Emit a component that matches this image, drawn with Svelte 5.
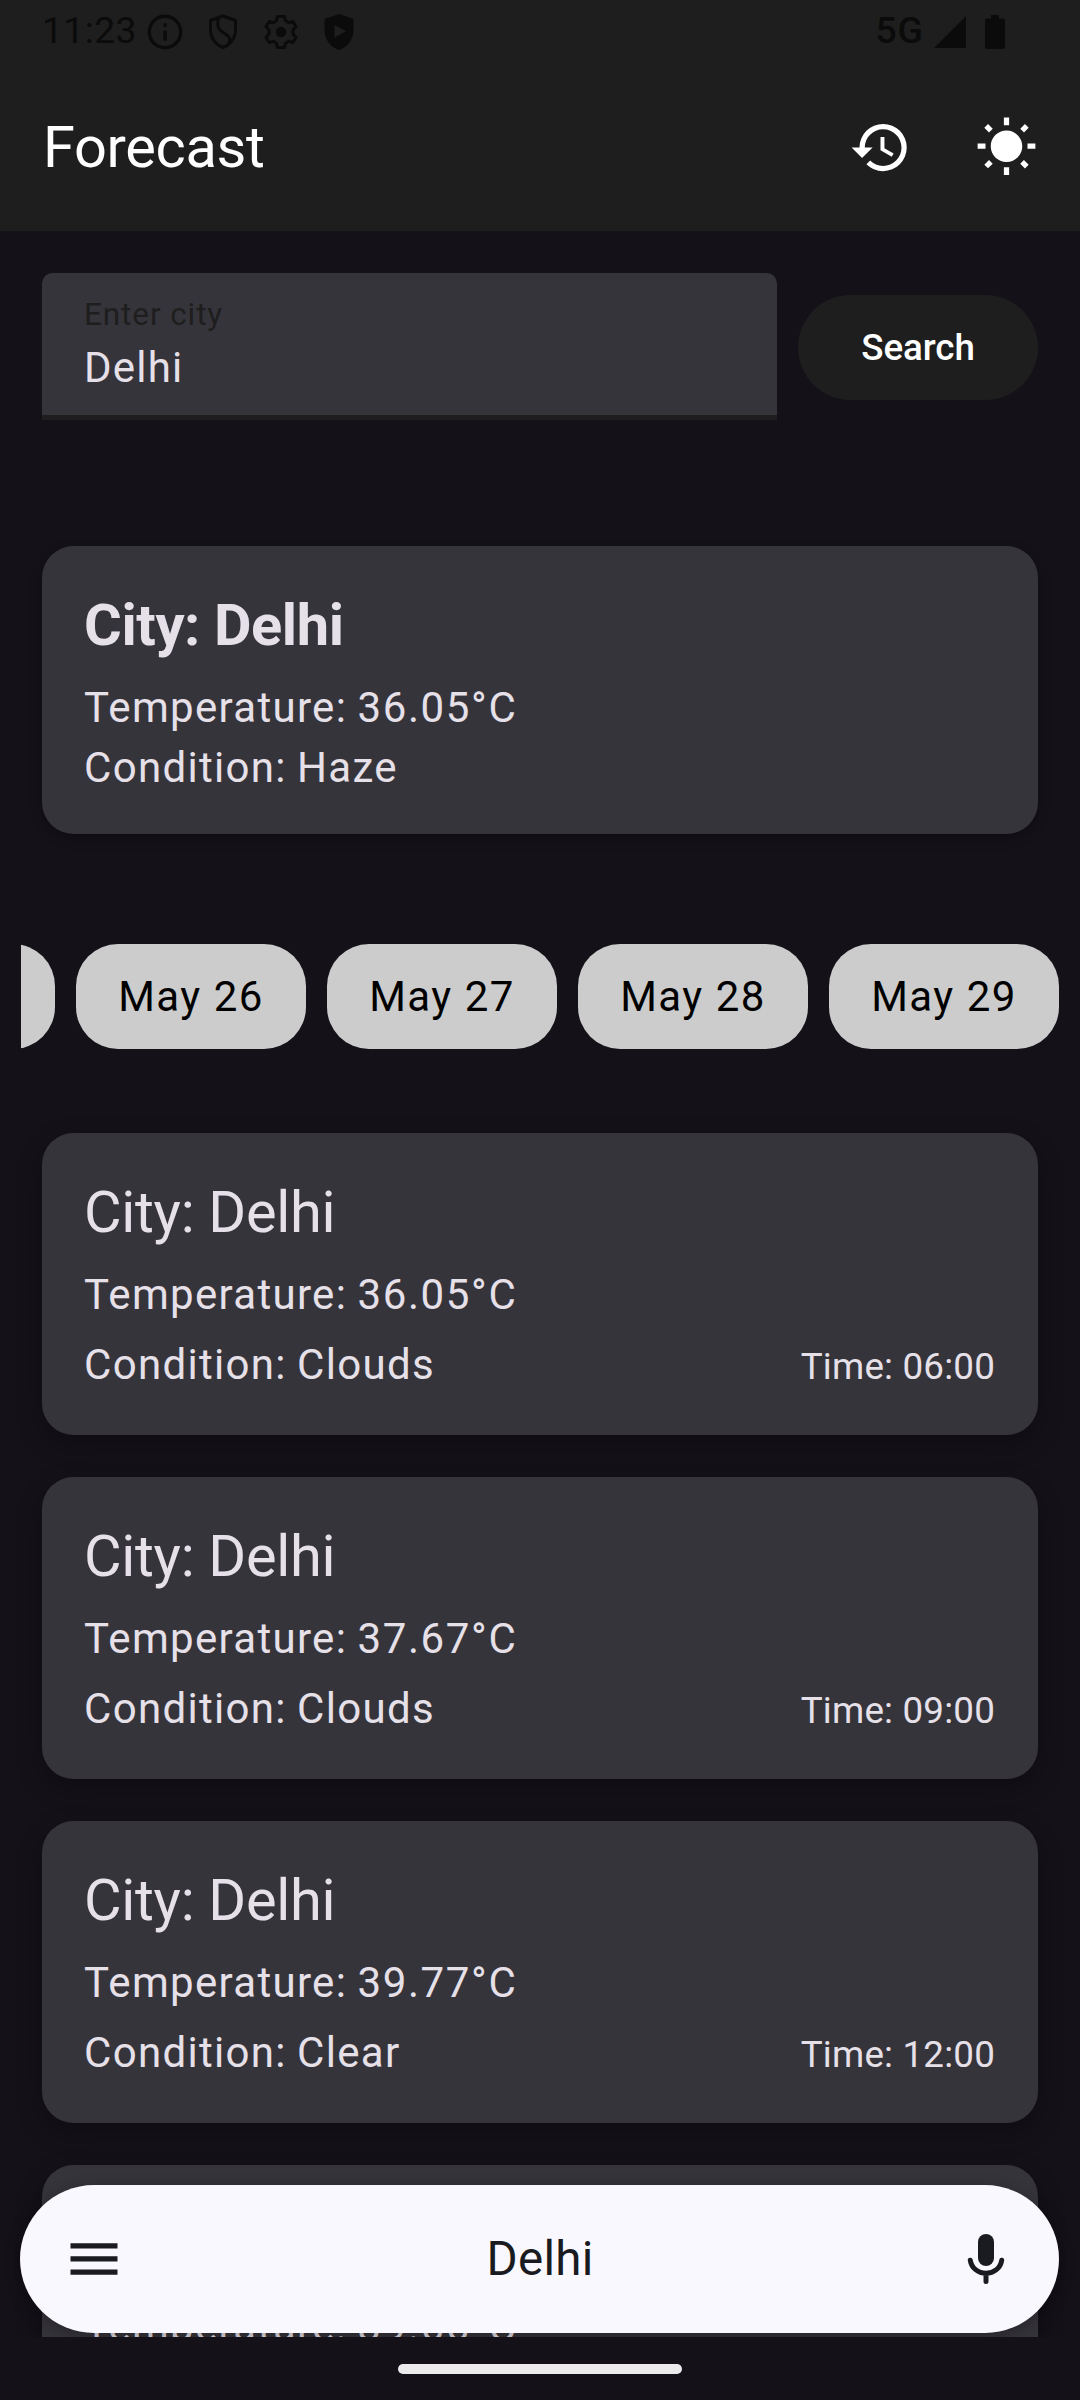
<script>
  const chips = ['May 26', 'May 27', 'May 28', 'May 29'];
  const forecasts = [
    { temp: '36.05', condition: 'Clouds', time: '06:00' },
    { temp: '37.67', condition: 'Clouds', time: '09:00' },
    { temp: '39.77', condition: 'Clear', time: '12:00' },
    { temp: '39.66', condition: 'Clear', time: '15:00' }
  ];
</script>

<div class="screen">
  <header>
    <div class="status">
      <span class="clock">11:23</span>
      <svg class="info" viewBox="0 0 36 36"><circle cx="18" cy="18" r="15.7" fill="none" stroke="currentColor" stroke-width="3.4" /><path fill="currentColor" d="M16.4 16.5h3.4v10.3h-3.4zM16.4 9.3h3.4v3.4h-3.4z" /></svg>
      <svg class="shield" viewBox="0 0 30 36"><path fill="none" stroke="currentColor" stroke-width="3" stroke-linejoin="round" d="M15 2 27.5 6.5V16C27.5 24 22 31 15 33.5C8 31 2.500 24 2.500 16V6.500ZM10.500 4C8 15 12 16 16 19C22 23 23 25 20.500 30" /></svg>
      <svg class="gear" viewBox="0 0 34 36"><path fill="none" stroke="currentColor" stroke-width="3" stroke-linejoin="round" d="M13.500 2.500h7l1 4.300 3.300 1.900 4-1.300 3.200 5.300-3 3.200v4.200l3 3.200-3.200 5.300-4-1.300-3.300 1.900-1 4.300h-7l-1-4.300-3.300-1.900-4 1.300L2 23.300l3-3.200v-4.200l-3-3.200 3.200-5.300 4 1.300 3.300-1.900Z" /><circle cx="17" cy="18" r="5.300" fill="currentColor" /></svg>
      <svg class="play" viewBox="0 0 30 36"><path fill="currentColor" fill-rule="evenodd" d="M15 0 29.500 5V16C29.500 26 23 33.500 15 36C7 33.500.500 26 .500 16V5ZM10.500 11V23.500L22 17.200Z" /></svg>
      <span class="net">5G</span>
      <svg class="signal" viewBox="0 0 32 32"><path fill="currentColor" d="M32 0V32H0Z" /></svg>
      <svg class="battery" viewBox="0 0 20 34"><path fill="currentColor" d="M6 0h8v3.500h4q2 0 2 2V32q0 2-2 2H2q-2 0-2-2V5.500q0-2 2-2h4Z" /></svg>
    </div>
    <div class="appbar">
      <h1>Forecast</h1>
      <svg class="action" viewBox="0 0 24 24"><path fill="currentColor" d="M13 3a9 9 0 0 0-9 9H1l3.890 3.890.070.140L9 12H6c0-3.870 3.130-7 7-7s7 3.130 7 7-3.130 7-7 7c-1.930 0-3.680-.790-4.940-2.060l-1.420 1.420A8.954 8.954 0 0 0 13 21a9 9 0 0 0 0-18zm-1 5v5l4.280 2.540.720-1.210-3.500-2.080V8H12z" /></svg>
      <svg class="action" viewBox="0 0 24 24"><path fill="currentColor" d="M6.760 4.840l-1.800-1.790-1.410 1.410 1.790 1.790 1.420-1.410zM4 10.500H1v2h3v-2zm9-9.950h-2V3.500h2V.550zm7.450 3.910l-1.410-1.410-1.790 1.790 1.410 1.410 1.790-1.790zm-3.210 13.700l1.790 1.800 1.410-1.410-1.800-1.790-1.400 1.400zM20 10.500v2h3v-2h-3zm-8-5c-3.310 0-6 2.690-6 6s2.690 6 6 6 6-2.690 6-6-2.690-6-6-6zm-1 16.950h2V19.500h-2v2.950zm-7.450-3.910l1.410 1.410 1.790-1.800-1.410-1.410-1.790 1.800z" /></svg>
    </div>
  </header>

  <main>
    <div class="search">
      <div class="field">
        <span class="label">Enter city</span>
        <span class="value">Delhi</span>
      </div>
      <button>Search</button>
    </div>

    <section class="card current">
      <h2>City: Delhi</h2>
      <p>Temperature: <span class="degrees">36.05°C</span></p>
      <p>Condition: Haze</p>
    </section>

    <div class="chips">
      <span class="chip"></span>
      {#each chips as chip}
        <span class="chip">{chip}</span>
      {/each}
    </div>

    <div class="list">
      {#each forecasts as f}
        <section class="card entry">
          <h2>City: Delhi</h2>
          <p>Temperature: <span class="degrees">{f.temp}°C</span></p>
          <div class="row">
            <p>Condition: {f.condition}</p>
            <span class="time">Time: {f.time}</span>
          </div>
        </section>
      {/each}
    </div>
    <div class="pill">
      <svg class="menu" viewBox="0 0 48 32"><path fill="currentColor" d="M.500.200h47v5.300H.500zM.500 13.300h47v5.300H.500zM.500 26.400h47v5.300H.500z" /></svg>
      <span class="query">Delhi</span>
      <svg class="mic" viewBox="0 0 38 52"><rect x="11" y="1" width="16" height="32" rx="8" fill="currentColor" /><path fill="none" stroke="currentColor" stroke-width="5" stroke-linecap="round" d="M3.300 27.300C4.500 35 11 40.300 19 40.300S33.500 35 34.700 27.300M19 40.500V48.500" /></svg>
    </div>
  </main>
  <div class="handle"></div>
</div>

<style>
  :global(body) {
    background: #141118;
  }
  .screen {
    width: 1080px;
    height: 2400px;
    overflow: hidden;
    display: flex;
    flex-direction: column;
    background: #141118;
    color: #e6e0e9;
    font-family: Roboto, sans-serif;
  }
  svg {
    display: block;
    flex: none;
  }
  h1,
  h2,
  p {
    margin: 0;
    font-weight: 400;
    white-space: nowrap;
  }
  header {
    flex: none;
    height: 231px;
    background: #1e1e1e;
    color: #fff;
  }
  .status {
    height: 63px;
    display: flex;
    align-items: center;
    padding: 0 75px 0 42px;
    color: #0b0b0b;
    font-size: 37.3px;
    line-height: 61px;
    box-sizing: border-box;
  }
  .clock,
  .net {
    height: 63px;
  }
  .clock {
    width: 105px;
    letter-spacing: 0.4px;
  }
  .info {
    width: 36px;
    height: 36px;
  }
  .shield {
    width: 30px;
    height: 36px;
    margin-left: 25px;
  }
  .gear {
    width: 34px;
    height: 36px;
    margin-left: 26px;
  }
  .play {
    width: 30px;
    height: 36px;
    margin-left: 26px;
  }
  .net {
    margin-left: auto;
    font-weight: 500;
    letter-spacing: 1px;
  }
  .signal {
    width: 32px;
    height: 32px;
    margin-left: 10px;
  }
  .battery {
    width: 20px;
    height: 34px;
    margin-left: 19px;
  }
  .appbar {
    height: 168px;
    display: flex;
    align-items: center;
    padding: 0 42px 0 43px;
    gap: 63px;
  }
  h1 {
    flex: 1;
    font-size: 57.75px;
    line-height: 74px;
    letter-spacing: -0.35px;
  }
  .action {
    width: 63px;
    height: 63px;
  }
  main {
    position: relative;
    flex: none;
    height: 2106px;
    overflow: hidden;
  }
  .search {
    display: flex;
    align-items: center;
    gap: 21px;
    padding: 42px 42px 0;
  }
  .field {
    width: 735px;
    height: 147px;
    box-sizing: border-box;
    padding: 21px 42px 0;
    display: flex;
    flex-direction: column;
    background: #36343b;
    border-bottom: 5px solid #1e1e1e;
    border-radius: 10.5px 10.5px 0 0;
  }
  .label {
    font-size: 31.5px;
    line-height: 42px;
    letter-spacing: 0.9px;
    color: #1e1e1e;
  }
  .value {
    font-size: 42px;
    line-height: 63px;
    letter-spacing: 1.2px;
  }
  button {
    width: 240px;
    height: 105px;
    margin-top: 2px;
    padding: 0;
    border: 0;
    border-radius: 53px;
    background: #1e1e1e;
    color: #fff;
    font: 500 36.75px/52px Roboto, sans-serif;
    letter-spacing: -0.1px;
  }
  .card {
    margin: 0 42px;
    padding: 42px 42px 0;
    box-sizing: border-box;
    background: #36343b;
    border-radius: 31.5px;
  }
  .card h2 {
    font-size: 57.75px;
    line-height: 74px;
    letter-spacing: -0.3px;
    margin-bottom: 16px;
  }
  .card p {
    font-size: 42px;
    line-height: 60px;
    letter-spacing: 1.31px;
    word-spacing: -1.5px;
  }
  .card .degrees {
    letter-spacing: 1.65px;
  }
  .current {
    height: 288px;
    margin-top: 126px;
    box-shadow: 0 4px 12px rgba(0, 0, 0, 0.25);
  }
  .current h2 {
    font-weight: 700;
    letter-spacing: -0.4px;
  }
  .chips {
    display: flex;
    justify-content: flex-end;
    gap: 21px;
    margin: 110px 21px 0;
    overflow: hidden;
  }
  .chip {
    flex: none;
    width: 230px;
    height: 105px;
    border-radius: 42px;
    background: #ccc;
    color: #000;
    font-size: 42px;
    line-height: 105px;
    letter-spacing: 1.5px;
    text-align: center;
  }
  .list {
    display: flex;
    flex-direction: column;
    gap: 42px;
    margin-top: 84px;
  }
  .entry {
    flex: none;
    height: 302px;
    box-shadow: 0 10px 26px rgba(0, 0, 0, 0.28);
  }
  .row {
    display: flex;
    justify-content: space-between;
    align-items: baseline;
    margin-top: 10px;
  }
  .time {
    padding-right: 1px;
    font-size: 36.75px;
    line-height: 52px;
    letter-spacing: 0.2px;
  }
  .pill {
    position: absolute;
    left: 20px;
    right: 21px;
    bottom: 4px;
    height: 148px;
    box-sizing: border-box;
    padding: 0 54px 0 50px;
    display: flex;
    align-items: center;
    justify-content: space-between;
    border-radius: 74px;
    background: #f9f8fe;
    color: #1a1b20;
    box-shadow: 0 4px 16px rgba(0, 0, 0, 0.3);
  }
  .menu {
    width: 48px;
    height: 32px;
  }
  .query {
    padding-right: 5px;
    font-size: 47.5px;
    line-height: 64px;
    letter-spacing: 0.3px;
  }
  .mic {
    width: 38px;
    height: 52px;
  }
  .handle {
    flex: none;
    width: 284px;
    height: 10px;
    margin: 27px auto 0;
    border-radius: 5px;
    background: #ebebeb;
  }
</style>
